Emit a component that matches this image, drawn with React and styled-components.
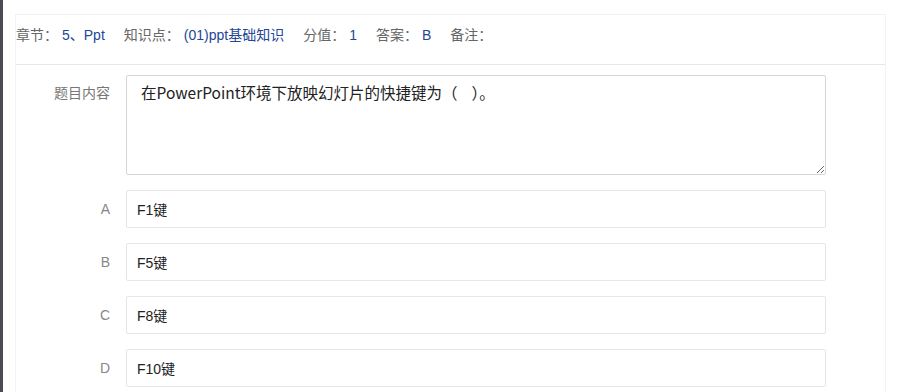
import React from 'react';
import styled, {createGlobalStyle} from 'styled-components';

const GlobalStyle = createGlobalStyle`
  html, body {
    margin: 0;
    padding: 0;
    background: #fff;
  }
  body {
    font-family: "Liberation Sans", "Noto Sans CJK SC", sans-serif;
  }
`

const Page = styled.div`
  display: flex;
  min-height: 392px;
`

const SideEdge = styled.div`
  width: 3px;
  flex-shrink: 0;
  background: #4b4b52;
`

const Content = styled.div`
  flex: 1;
  padding: 14px 14px 0 12px;
`

const Panel = styled.div`
  border: 1px solid #f3f3f3;
  border-bottom: none;
  min-height: 377px;
  background: #fff;
`

const InfoBar = styled.div`
  display: flex;
  align-items: center;
  padding: 10px 0 19px;
  border-bottom: 1px solid #e6e6e6;
  font-size: 14px;
  line-height: 20px;
`

const InfoItem = styled.div`
  display: flex;
  margin-right: 19px;
`

const InfoLabel = styled.span`
  color: #666;
`

const InfoValue = styled.span`
  color: #23469a;
  margin-left: 4px;
`

const Form = styled.div`
  display: flex;
  flex-direction: column;
  gap: 15px;
  padding-top: 10px;
`

const Row = styled.div`
  display: flex;
  align-items: ${p => (p.top ? 'flex-start' : 'center')};
`

const Label = styled.div`
  width: 94px;
  margin-right: 16px;
  text-align: right;
  font-size: 14px;
  color: ${p => (p.letter ? '#888' : '#777')};
  padding-top: ${p => (p.top ? '8px' : '0')};
  line-height: 20px;
`

const QuestionBox = styled.textarea`
  box-sizing: border-box;
  width: 700px;
  height: 100px;
  margin: 0;
  padding: 5px 14px;
  border: 1px solid #d6d6d6;
  border-radius: 2px;
  font-family: "Noto Sans CJK SC", "Liberation Sans", sans-serif;
  font-size: 15.5px;
  line-height: 22px;
  color: #222;
  resize: vertical;
  outline: none;
`

const OptionInput = styled.input`
  box-sizing: border-box;
  width: 700px;
  height: 38px;
  margin: 0;
  padding: 0 10px;
  border: 1px solid #e6e6e6;
  border-radius: 2px;
  font-family: "Liberation Sans", "Noto Sans CJK SC", sans-serif;
  font-size: 14px;
  color: #222;
  outline: none;
`

const info = [
  ['章节：', '5、Ppt'],
  ['知识点：', '(01)ppt基础知识'],
  ['分值：', '1'],
  ['答案：', 'B'],
  ['备注：', ''],
];

const options = [
  ['A', 'F1键'],
  ['B', 'F5键'],
  ['C', 'F8键'],
  ['D', 'F10键'],
];

const App = () => (
  <Page>
    <GlobalStyle />
    <SideEdge />
    <Content>
      <Panel>
        <InfoBar>
          {info.map(([label, value]) => (
            <InfoItem key={label}>
              <InfoLabel>{label}</InfoLabel>
              {value && <InfoValue>{value}</InfoValue>}
            </InfoItem>
          ))}
        </InfoBar>
        <Form>
          <Row top>
            <Label top>题目内容</Label>
            <QuestionBox defaultValue="在PowerPoint环境下放映幻灯片的快捷键为（    ）。" />
          </Row>
          {options.map(([letter, text]) => (
            <Row key={letter}>
              <Label letter>{letter}</Label>
              <OptionInput defaultValue={text} />
            </Row>
          ))}
        </Form>
      </Panel>
    </Content>
  </Page>
);

export default App;
